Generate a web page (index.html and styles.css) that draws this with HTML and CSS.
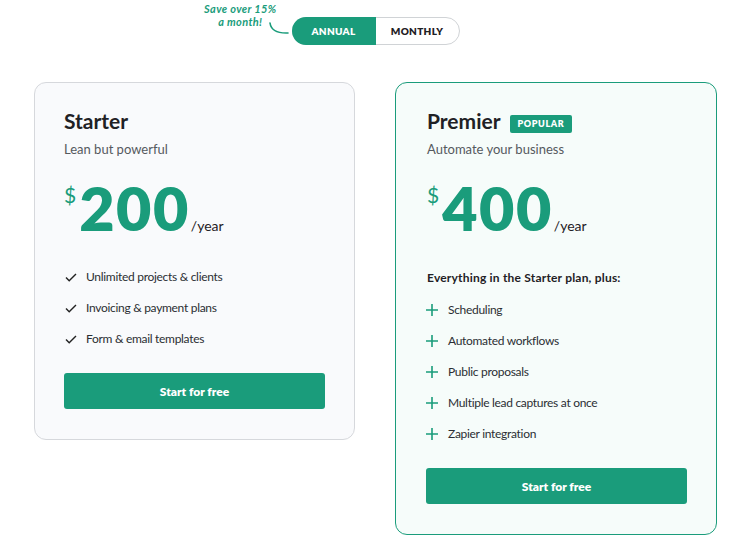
FILE: index.html
```html
<!DOCTYPE html>
<html lang="en">
<head>
    <meta charset="UTF-8">
    <meta name="viewport" content="width=device-width, initial-scale=1.0">
    <title>Pricing</title>
    <link rel="stylesheet" href="styles.css">
</head>
<body>

    <div class="billing">
        <div class="toggle">
            <div class="save-note">
                <span>Save over 15%<br>a month!</span>
                <svg class="save-arrow" width="22" height="14" viewBox="0 0 22 14">
                    <path d="M2 1 C3 8 8 11.5 20 11" fill="none" stroke="#1a9c7b" stroke-width="1.6" stroke-linecap="round"/>
                </svg>
            </div>
            <button class="toggle-btn active">ANNUAL</button>
            <button class="toggle-btn">MONTHLY</button>
        </div>
    </div>

    <div class="plans">
        <div class="plan">
            <h2 class="plan-name">Starter</h2>
            <p class="plan-tagline">Lean but powerful</p>
            <div class="price">
                <span class="currency">$</span>
                <span class="amount">200</span>
                <span class="period">/year</span>
            </div>
            <ul class="features">
                <li><svg class="icon check" viewBox="0 0 12 9"><path d="M1 4.5 L4.2 7.8 L11 1" fill="none" stroke="#222" stroke-width="1.4"/></svg>Unlimited projects &amp; clients</li>
                <li><svg class="icon check" viewBox="0 0 12 9"><path d="M1 4.5 L4.2 7.8 L11 1" fill="none" stroke="#222" stroke-width="1.4"/></svg>Invoicing &amp; payment plans</li>
                <li><svg class="icon check" viewBox="0 0 12 9"><path d="M1 4.5 L4.2 7.8 L11 1" fill="none" stroke="#222" stroke-width="1.4"/></svg>Form &amp; email templates</li>
            </ul>
            <button class="cta">Start for free</button>
        </div>

        <div class="plan plan-featured">
            <h2 class="plan-name">Premier <span class="badge">POPULAR</span></h2>
            <p class="plan-tagline">Automate your business</p>
            <div class="price">
                <span class="currency">$</span>
                <span class="amount">400</span>
                <span class="period">/year</span>
            </div>
            <p class="includes">Everything in the Starter plan, plus:</p>
            <ul class="features plus">
                <li><svg class="icon" viewBox="0 0 12 12"><path d="M6 0 V12 M0 6 H12" stroke="#1a9c7b" stroke-width="1.6"/></svg>Scheduling</li>
                <li><svg class="icon" viewBox="0 0 12 12"><path d="M6 0 V12 M0 6 H12" stroke="#1a9c7b" stroke-width="1.6"/></svg>Automated workflows</li>
                <li><svg class="icon" viewBox="0 0 12 12"><path d="M6 0 V12 M0 6 H12" stroke="#1a9c7b" stroke-width="1.6"/></svg>Public proposals</li>
                <li><svg class="icon" viewBox="0 0 12 12"><path d="M6 0 V12 M0 6 H12" stroke="#1a9c7b" stroke-width="1.6"/></svg>Multiple lead captures at once</li>
                <li><svg class="icon" viewBox="0 0 12 12"><path d="M6 0 V12 M0 6 H12" stroke="#1a9c7b" stroke-width="1.6"/></svg>Zapier integration</li>
            </ul>
            <button class="cta">Start for free</button>
        </div>
    </div>

</body>
</html>
```

FILE: styles.css
```css
body {
    font-family: Lato, "Open Sans", sans-serif;
    color: #1f2125;
    background: #fff;
    margin: 0;
}

.billing {
    display: flex;
    justify-content: center;
    padding-top: 17px;
}
.toggle {
    position: relative;
    display: flex;
    border: 1px solid #d0d3d6;
    border-radius: 15px;
    margin-left: 1px;
}
.toggle-btn {
    font-family: Lato, sans-serif;
    font-weight: 800;
    font-size: 10px;
    letter-spacing: 0.3px;
    width: 83px;
    height: 26px;
    border: none;
    background: transparent;
    color: #1f2125;
    padding: 0;
    cursor: pointer;
}
.toggle-btn.active {
    background: #1a9c7b;
    color: #fff;
    border-radius: 14px 0 0 14px;
    margin: -1px 0 -1px -1px;
    height: 28px;
    width: 84px;
}
.save-note {
    position: absolute;
    right: 100%;
    top: -16px;
    margin-right: 17px;
    font-weight: 700;
    font-style: italic;
    font-size: 11px;
    letter-spacing: 0.35px;
    line-height: 13px;
    color: #1a9c7b;
    text-align: center;
    white-space: nowrap;
}
.save-note span {
    display: block;
    margin-right: -1px;
}
.save-arrow {
    position: absolute;
    right: -14px;
    top: 20px;
}

.plans {
    display: flex;
    justify-content: center;
    align-items: flex-start;
    gap: 40px;
    margin-top: 37px;
    padding-left: 1px;
}
.plan {
    width: 321px;
    box-sizing: border-box;
    padding: 25px 29px 30px 29px;
    background: #f9fafc;
    border: 1px solid #d6d8dc;
    border-radius: 12px;
}
.plan-featured {
    width: 322px;
    padding-left: 30px;
    background: #f6fcfa;
    border-color: #1a9c7b;
}
.plan-name {
    display: flex;
    align-items: center;
    gap: 9px;
    font-size: 21px;
    line-height: 26px;
    font-weight: 700;
    margin: 0;
}
.plan-featured .plan-name,
.plan-featured .plan-tagline,
.plan-featured .price {
    padding-left: 1px;
}
.badge {
    background: #1a9c7b;
    color: #fff;
    font-size: 9px;
    font-weight: 800;
    letter-spacing: 0.6px;
    line-height: 18px;
    padding: 0 8px;
    margin-top: 6px;
    border-radius: 2px;
}
.plan-tagline {
    font-size: 13px;
    line-height: 18px;
    color: #55595e;
    margin: 6px 0 0;
}

.price {
    display: flex;
    align-items: baseline;
    margin-top: 20px;
    height: 60px;
    color: #1a9c7b;
}
.currency {
    align-self: flex-start;
    font-size: 21px;
    line-height: 21px;
    margin: 6px 3px 0 0;
}
.amount {
    font-size: 61px;
    line-height: 60px;
    font-weight: 800;
    letter-spacing: 1.5px;
}
.period {
    font-size: 14px;
    color: #1f2125;
    margin-left: 1px;
}

.features {
    list-style: none;
    padding: 0;
    margin: 30px 0 0;
    display: flex;
    flex-direction: column;
    gap: 13px;
}
.features li {
    display: flex;
    align-items: center;
    gap: 10px;
    font-size: 12px;
    letter-spacing: -0.3px;
    line-height: 18px;
    color: #2b2e33;
}
.icon {
    width: 12px;
    height: 12px;
    flex-shrink: 0;
}
.icon.check {
    height: 9px;
    margin-left: 1px;
    margin-right: -1px;
}
.includes {
    font-size: 12px;
    letter-spacing: 0.2px;
    line-height: 18px;
    font-weight: 700;
    margin: 31px 0 0;
    padding-left: 1px;
}
.features.plus {
    margin-top: 14px;
}

.cta {
    display: block;
    width: 100%;
    height: 36px;
    margin-top: 25px;
    border: none;
    border-radius: 3px;
    background: #1a9c7b;
    color: #fff;
    font-family: Lato, sans-serif;
    font-weight: 800;
    font-size: 12px;
    cursor: pointer;
}
.plan-featured .cta {
    margin-top: 25px;
}
```
